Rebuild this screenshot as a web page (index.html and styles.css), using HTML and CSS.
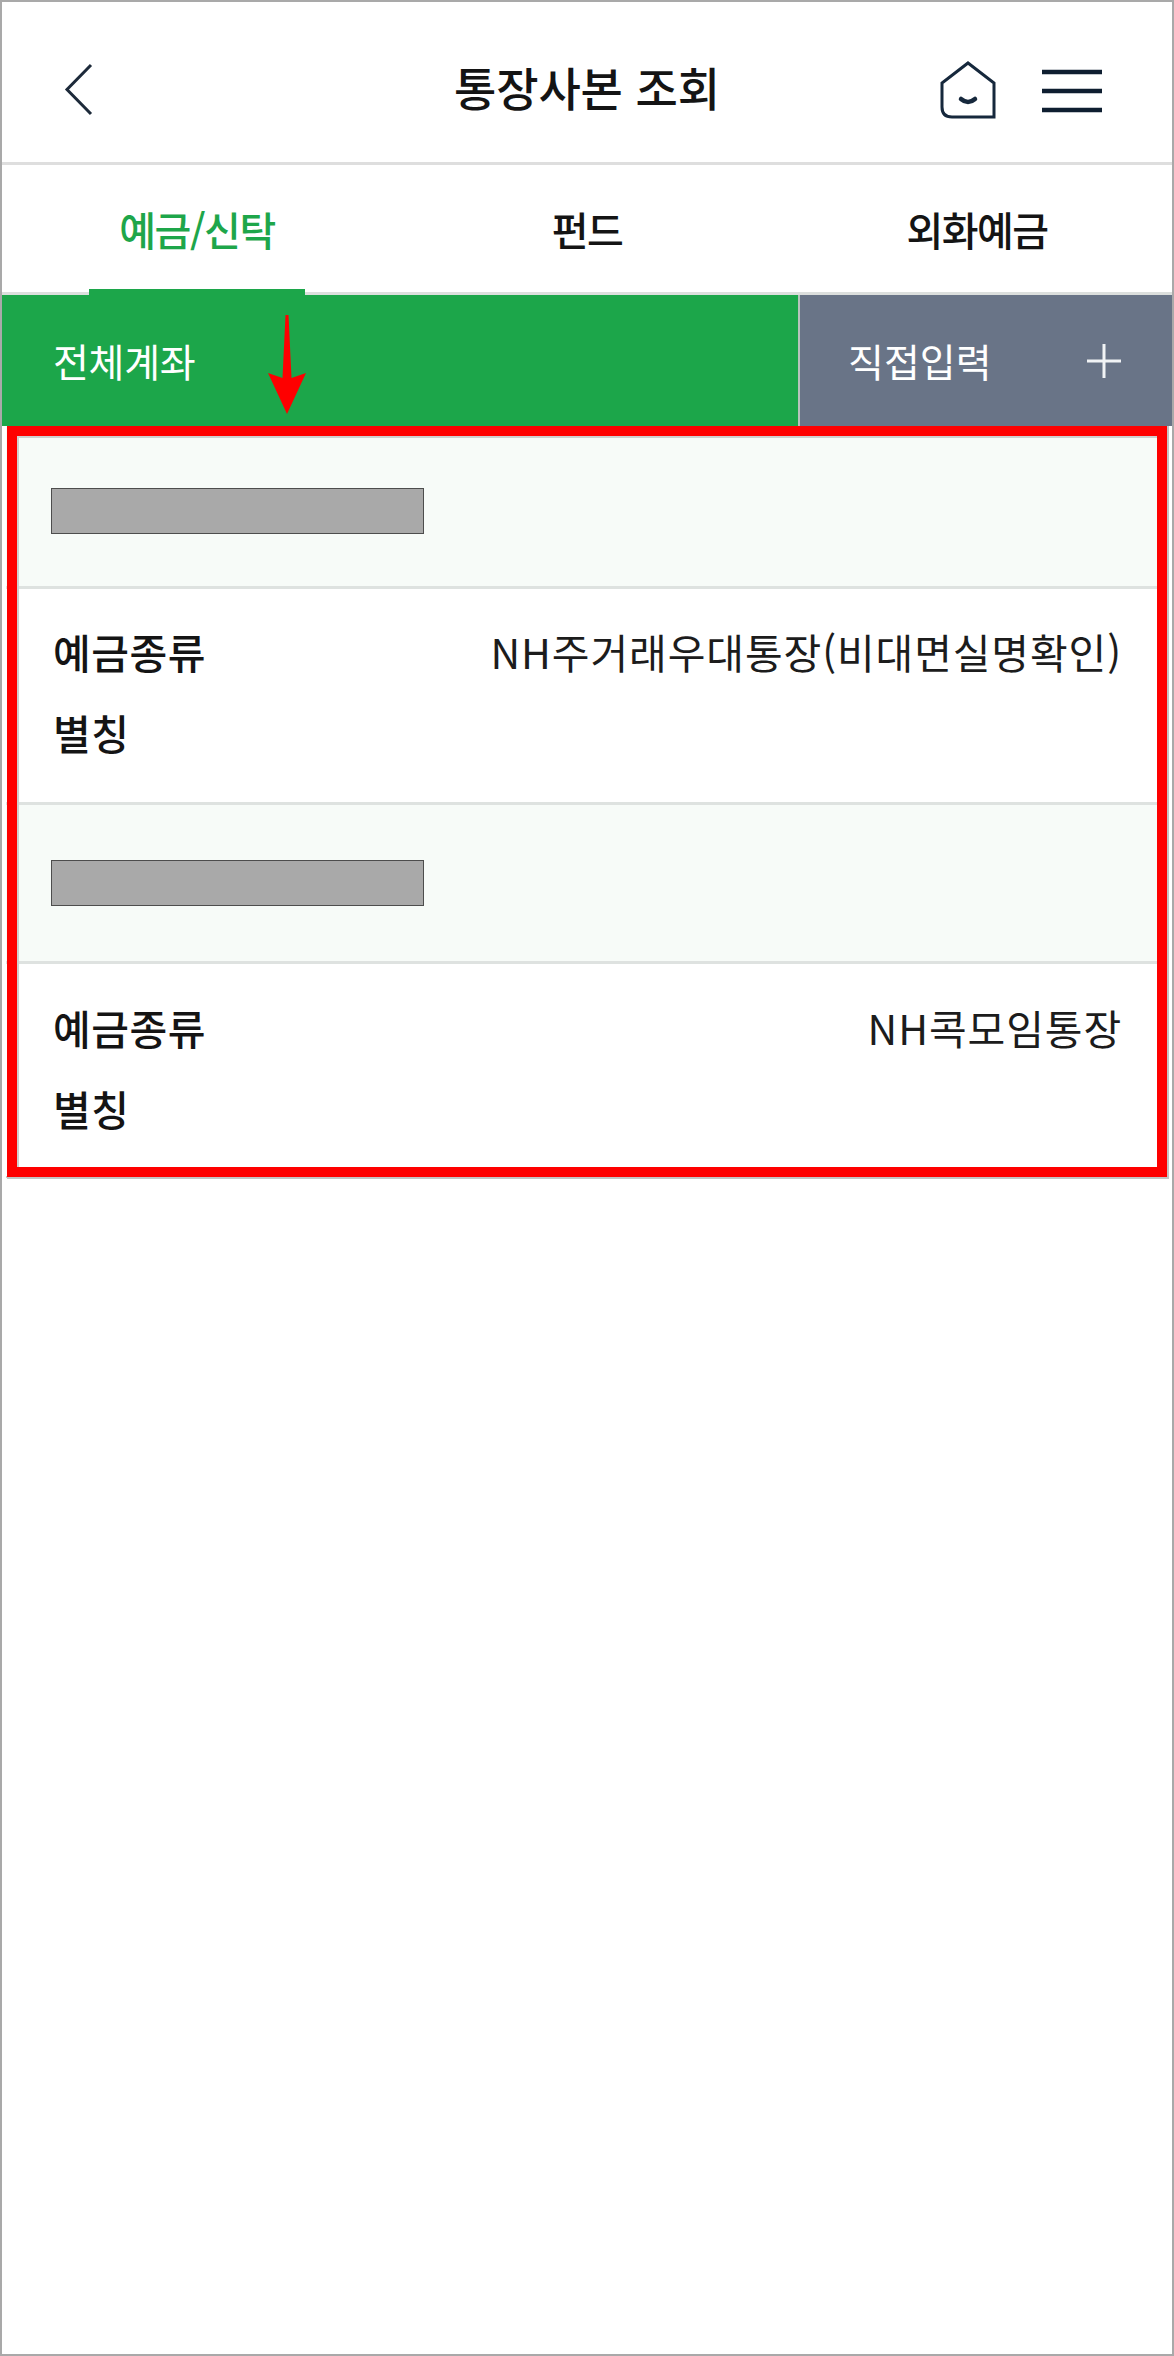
FILE: index.html
```html
<!DOCTYPE html>
<html lang="ko">
<head>
<meta charset="utf-8">
<title>통장사본 조회</title>
<link rel="stylesheet" href="styles.css">
</head>
<body>
<div class="screen">
  <header class="topbar">
    <svg class="icon-back" width="30" height="54" viewBox="0 0 30 54"><path d="M27 2 L3 26.5 L27 51"/></svg>
    <h1 class="title">통장사본 조회</h1>
    <div class="top-actions">
      <svg class="icon-home" width="56" height="58" viewBox="0 0 56 58"><path d="M28 2 L54 22 V56 H12 Q2 56 2 46 V22 Z"/><path class="smile" d="M21 38 Q28 44 35 38"/></svg>
      <svg class="icon-menu" width="60" height="44" viewBox="0 0 60 44"><path d="M0 3 H60 M0 22 H60 M0 41 H60"/></svg>
    </div>
  </header>
  <nav class="tabs">
    <div class="tab tab-active">예금/신탁</div>
    <div class="tab">펀드</div>
    <div class="tab">외화예금</div>
  </nav>
  <div class="filters">
    <div class="filter filter-all">전체계좌</div>
    <div class="filter filter-direct"><span>직접입력</span>
      <svg class="icon-plus" width="34" height="34" viewBox="0 0 34 34"><path d="M17 0 V34 M0 17 H34"/></svg>
    </div>
  </div>
  <section class="accounts">
    <div class="account-head head-one"><div class="redact"></div></div>
    <div class="account-body body-one">
      <div class="row"><span class="label">예금종류</span><span class="value">NH주거래우대통장(비대면실명확인)</span></div>
      <div class="row"><span class="label">별칭</span></div>
    </div>
    <div class="account-head head-two"><div class="redact"></div></div>
    <div class="account-body body-two">
      <div class="row"><span class="label">예금종류</span><span class="value">NH콕모임통장</span></div>
      <div class="row"><span class="label">별칭</span></div>
    </div>
    <div class="highlight"></div>
  </section>
  <svg class="arrow" width="38" height="100" viewBox="0 0 38 100"><path d="M17.5 0 H20.5 L23.5 63 L38 58 L19 99 L0 58 L14.5 63 Z"/></svg>
</div>
</body>
</html>
```
FILE: styles.css
```css
* { box-sizing: border-box; }
html, body { margin: 0; padding: 0; background: #fff; }
body { font-family: "Noto Sans CJK KR", "Noto Sans", sans-serif; color: #141414; }
.screen {
  position: relative;
  width: 1174px;
  height: 2356px;
  border: 2px solid #a9a9a9;
  background: #fff;
  overflow: hidden;
}
.topbar {
  position: relative;
  height: 163px;
  border-bottom: 3px solid #dedede;
  display: flex;
  align-items: center;
  justify-content: space-between;
  padding: 18px 70px 0 62px;
}
.title {
  position: absolute;
  left: 0;
  right: 0;
  top: 0;
  margin: 0;
  text-align: center;
  font-size: 46px;
  line-height: 168px;
  font-weight: 500;
  letter-spacing: -0.1px;
}
.icon-back { fill: none; stroke: #1d2a3a; stroke-width: 3px; margin-top: -2px; }
.top-actions { display: flex; align-items: center; gap: 46px; margin-top: -1px; }
.icon-home { fill: none; stroke: #16283c; stroke-width: 3px; margin-top: -1px; }
.icon-home .smile { stroke-width: 4.5px; stroke-linecap: round; }
.icon-menu { fill: none; stroke: #0e1e30; stroke-width: 4.5px; }
.tabs {
  height: 130px;
  display: flex;
  border-bottom: 3px solid #dcdfdd;
}
.tab {
  width: 390px;
  text-align: center;
  font-size: 40px;
  line-height: 129px;
  letter-spacing: -1.5px;
  font-weight: 500;
  position: relative;
}
.tab-active { color: #1ea64a; }
.tab-active::after {
  content: "";
  position: absolute;
  left: 87px;
  bottom: -3px;
  width: 216px;
  height: 6px;
  background: #1ca64a;
}
.filters { display: flex; height: 131px; color: #fff; font-size: 39px; }
.filter { display: flex; align-items: center; line-height: 1; }
.filter-all { width: 796px; background: #1ca64a; padding-left: 51px; letter-spacing: -0.3px; }
.filter-direct {
  flex: 1;
  background: #697487;
  border-left: 2px solid #b9c2bd;
  padding: 0 51px 0 48px;
  justify-content: space-between;
}
.icon-plus { fill: none; stroke: #f1f3f5; stroke-width: 3px; }
.accounts {
  position: relative;
  margin: 0 4px;
  border-bottom: 2px solid #c9c9c9;
  height: 752px;
}
.account-head {
  background: #f7fbf8;
  border-bottom: 3px solid #dee2e0;
  display: flex;
  align-items: center;
  padding-left: 45px;
}
.head-one { height: 163px; padding-top: 9px; }
.head-two { height: 162px; border-top: 3px solid #dee2e0; }
.redact {
  width: 373px;
  height: 46px;
  background: #a9a9a9;
  border: 1px solid #4d4d4d;
}
.account-body { padding: 0 46px 0 47px; }
.body-one { height: 213px; padding-top: 21px; }
.body-two { height: 213px; padding-top: 22px; }
.row { display: flex; justify-content: space-between; align-items: center; height: 81px; font-size: 41px; }
.label { font-weight: 500; letter-spacing: 0.5px; }
.value { font-weight: 400; letter-spacing: 0.9px; color: #1c1c1c; }
.highlight {
  position: absolute;
  left: 1px;
  top: 0;
  width: 1160px;
  height: 751px;
  border: 10px solid #fe0000;
  box-shadow: inset 2px 2px 0 #cfcfcf, 1px 1px 0 1px #c4c4c4;
  pointer-events: none;
}
.arrow { position: absolute; left: 266px; top: 313px; fill: #fe0000; }
```
